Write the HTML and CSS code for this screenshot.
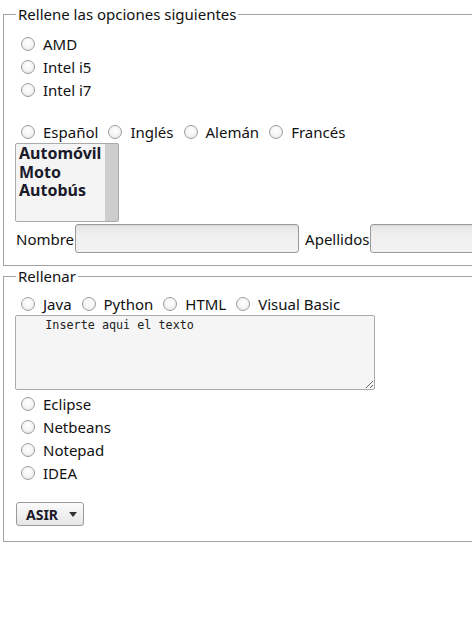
FILE: index.html
```html
<!DOCTYPE html>
<html lang="es">
<head>
<meta charset="utf-8">
<title>Formulario</title>
<link rel="stylesheet" href="styles.css">
</head>
<body>
<form class="page">
  <fieldset class="box box-first">
    <legend class="legend">Rellene las opciones siguientes</legend>
    <div class="stack">
      <label class="opt"><span class="radio"></span><span class="txt">AMD</span></label>
      <label class="opt"><span class="radio"></span><span class="txt">Intel i5</span></label>
      <label class="opt"><span class="radio"></span><span class="txt">Intel i7</span></label>
    </div>
    <div class="blank"></div>
    <div class="line">
      <label class="opt"><span class="radio"></span><span class="txt">Español</span></label>
      <label class="opt"><span class="radio"></span><span class="txt">Inglés</span></label>
      <label class="opt"><span class="radio"></span><span class="txt">Alemán</span></label>
      <label class="opt"><span class="radio"></span><span class="txt">Francés</span></label>
    </div>
    <div class="listbox">
      <div class="listbox-items">
        <div class="listbox-item">Automóvil</div>
        <div class="listbox-item">Moto</div>
        <div class="listbox-item">Autobús</div>
      </div>
      <div class="listbox-scroll"></div>
    </div>
    <div class="names">
      <span class="name-label">Nombre</span>
      <input class="field field-nombre" type="text">
      <span class="name-label name-label-ap">Apellidos</span>
      <input class="field field-apellidos" type="text">
    </div>
  </fieldset>

  <fieldset class="box box-second">
    <legend class="legend">Rellenar</legend>
    <div class="line">
      <label class="opt"><span class="radio"></span><span class="txt">Java</span></label>
      <label class="opt"><span class="radio"></span><span class="txt">Python</span></label>
      <label class="opt"><span class="radio"></span><span class="txt">HTML</span></label>
      <label class="opt"><span class="radio"></span><span class="txt">Visual Basic</span></label>
    </div>
    <textarea class="area">    Inserte aqui el texto</textarea>
    <div class="stack stack-ide">
      <label class="opt"><span class="radio"></span><span class="txt">Eclipse</span></label>
      <label class="opt"><span class="radio"></span><span class="txt">Netbeans</span></label>
      <label class="opt"><span class="radio"></span><span class="txt">Notepad</span></label>
      <label class="opt"><span class="radio"></span><span class="txt">IDEA</span></label>
    </div>
    <div class="dropdown">
      <span class="dropdown-text">ASIR</span>
      <span class="dropdown-arrow"></span>
    </div>
  </fieldset>
</form>
</body>
</html>
```

FILE: styles.css
```css
html {
  overflow: hidden;
}

body {
  margin: 0;
  font-family: "Noto Sans", "Open Sans", sans-serif;
  font-size: 15px;
  color: #111;
  background: #fff;
}

.page {
  display: block;
  width: 520px;
}

.box {
  margin: 0 0 0 3px;
  border: 1px solid #a3a3a3;
  min-width: 0;
}

.box-first {
  margin-top: 4px;
  padding: 7px 12px 12px 12px;
}

.box-second {
  padding: 5px 12px 15px 12px;
}

.legend {
  padding: 0 2px;
  line-height: 21px;
}

.stack {
  display: flex;
  flex-direction: column;
}

.opt {
  display: flex;
  align-items: center;
  height: 23px;
  white-space: nowrap;
}

.line {
  display: flex;
  align-items: center;
  height: 23px;
}

.line .opt {
  margin-right: 5px;
}

.radio {
  width: 12px;
  height: 12px;
  border: 1px solid #9d9d9d;
  border-radius: 50%;
  background: radial-gradient(circle at 50% 40%, #ffffff 0%, #f4f4f4 55%, #dedede 100%);
  margin: 0 8px 0 5px;
  flex: none;
}

.blank {
  height: 19px;
}

.listbox {
  display: flex;
  width: 102px;
  height: 77px;
  border: 1px solid #aaa;
  border-radius: 2px;
  background: #f4f4f4;
  margin-left: -1px;
}

.listbox-items {
  flex: 1;
  padding: 0 0 0 3px;
  font-size: 16px;
  font-weight: bold;
  line-height: 18.5px;
  color: #1a1a2a;
}

.listbox-scroll {
  width: 13px;
  background: #cdcdcd;
}

.names {
  display: flex;
  align-items: center;
  margin-top: 2px;
  height: 29px;
  white-space: nowrap;
}

.name-label {
  margin-right: 1px;
}

.name-label-ap {
  margin-left: 6px;
}

.field {
  box-sizing: border-box;
  height: 29px;
  border: 1px solid #9a9a9a;
  border-radius: 3px;
  background: linear-gradient(#e4e4e4, #f0f0f0 40%, #f2f2f2);
  box-shadow: inset 0 1px 1px rgba(0, 0, 0, 0.06);
  margin: 0;
  padding: 0;
  font: inherit;
}

.field-nombre {
  width: 225px;
}

.field-apellidos {
  width: 225px;
}

.area {
  display: block;
  box-sizing: border-box;
  width: 360px;
  height: 75px;
  margin: 0 0 2px -1px;
  border: 1px solid #aaa;
  border-radius: 2px;
  background: #f5f5f5;
  font-family: "DejaVu Sans Mono", monospace;
  font-size: 11.75px;
  line-height: 15px;
  color: #222;
  padding: 2px 2px 2px 1px;
  resize: both;
}

.dropdown {
  display: inline-flex;
  align-items: center;
  box-sizing: border-box;
  width: 68px;
  height: 24px;
  margin-top: 18px;
  border: 1px solid #9a9a9a;
  border-radius: 3px;
  background: linear-gradient(#fbfbfb, #e6e6e6);
  padding-left: 9px;
}

.dropdown-text {
  font-weight: bold;
  font-size: 14px;
  color: #1a1a2a;
}

.dropdown-arrow {
  margin-left: 11px;
  width: 0;
  height: 0;
  border-left: 4px solid transparent;
  border-right: 4px solid transparent;
  border-top: 5px solid #333;
}
```
